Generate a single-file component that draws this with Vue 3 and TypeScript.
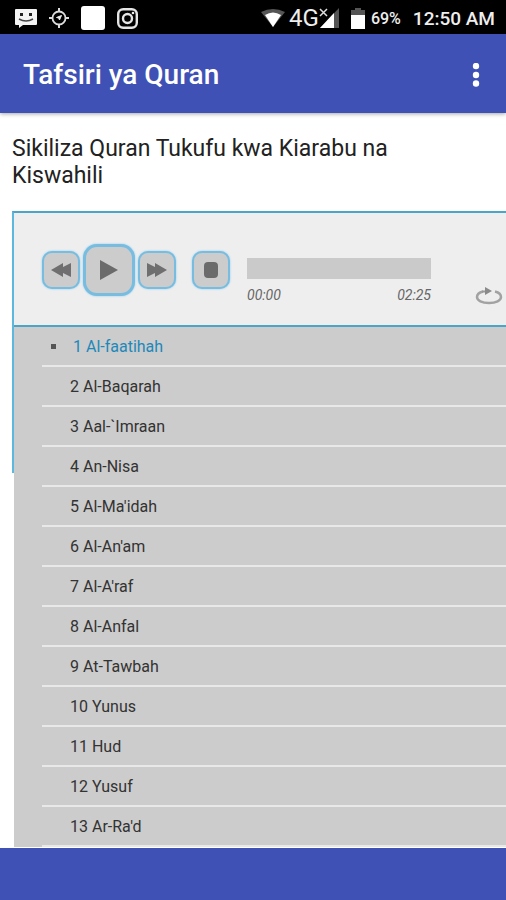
<script setup lang="ts">
import { ref } from 'vue'

const tracks: string[] = [
  'Al-faatihah',
  'Al-Baqarah',
  'Aal-`Imraan',
  'An-Nisa',
  "Al-Ma'idah",
  "Al-An'am",
  "Al-A'raf",
  'Al-Anfal',
  'At-Tawbah',
  'Yunus',
  'Hud',
  'Yusuf',
  "Ar-Ra'd",
]

const current = ref(0)
const position = ref(0)
const repeat = ref(false)

function select(index: number): void {
  current.value = Math.min(Math.max(index, 0), tracks.length - 1)
  position.value = 0
}
</script>

<template>
  <div class="screen">
    <div class="status">
      <div class="status-group notices">
        <svg width="22" height="19" viewBox="0 0 22 19" aria-hidden="true">
          <path d="M1 0h20q1 0 1 1v14q0 1-1 1H8l-4 3v-3H1q-1 0-1-1V1q0-1 1-1z" fill="#f4f4f4" />
          <rect x="5" y="4" width="3" height="3" fill="#222" />
          <rect x="14" y="4" width="3" height="3" fill="#222" />
          <path d="M4 10q7 4 14 0" fill="none" stroke="#444" stroke-width="1.500" />
        </svg>
        <svg width="20" height="20" viewBox="0 0 20 20" fill="none" stroke="#ddd" aria-hidden="true">
          <circle cx="10" cy="10" r="6.500" stroke-width="1.800" />
          <path d="M10 0v4M10 16v4M0 10h4M16 10h4" stroke-width="2" />
          <path d="M12.500 7.500l-2 4.500-.8-2L7.500 9.500z" fill="#eee" stroke="#eee" />
        </svg>
        <svg width="24" height="24" viewBox="0 0 24 24" aria-hidden="true">
          <rect width="24" height="24" rx="3" fill="#fff" />
        </svg>
        <svg width="21" height="21" viewBox="0 0 21 21" fill="none" stroke="#e4e4e4" stroke-width="2.400" aria-hidden="true">
          <rect x="1.200" y="1.200" width="18.600" height="18.600" rx="5" />
          <circle cx="10.500" cy="10.500" r="4.500" />
          <circle cx="16" cy="5" r="1.300" fill="#eee" stroke="none" />
        </svg>
      </div>
      <div class="status-group">
        <svg width="24" height="18" viewBox="0 0 24 18" aria-hidden="true">
          <path d="M0 3Q12-3 24 3L12 18z" fill="#555" />
          <path d="M4 6Q12 1 20 6L12 18z" fill="#fff" />
        </svg>
        <div class="cell">
          <span class="network">4G</span>
          <svg width="20" height="20" viewBox="0 0 20 20" aria-hidden="true">
            <path d="M20 0v20H1z" fill="#555" />
            <path d="M15 5v15H1z" fill="#fff" />
            <path d="M1 1l7 7M8 1L1 8" stroke="#000" stroke-width="4" />
            <path d="M1 1l7 7M8 1L1 8" stroke="#ddd" stroke-width="1.500" />
          </svg>
        </div>
        <div class="cell battery">
          <svg width="14" height="21" viewBox="0 0 14 21" aria-hidden="true">
            <path d="M4 0h6v2h4v5H0V2h4z" fill="#555" />
            <path d="M0 7h14v14H0z" fill="#fff" />
          </svg>
          <span class="percent">69%</span>
        </div>
        <span class="clock">12:50 AM</span>
      </div>
    </div>

    <header class="appbar">
      <h1>Tafsiri ya Quran</h1>
      <button class="menu" type="button" aria-label="Menu">
        <svg width="8" height="24" viewBox="0 0 8 24" fill="#fff" aria-hidden="true">
          <circle cx="4" cy="3" r="3.200" />
          <circle cx="4" cy="12" r="3.200" />
          <circle cx="4" cy="20.500" r="3.200" />
        </svg>
      </button>
    </header>

    <main class="content">
      <p class="intro">Sikiliza Quran Tukufu kwa Kiarabu na Kiswahili</p>

      <section class="player">
        <div class="controls">
          <div class="buttons">
            <button class="key" type="button" aria-label="Previous" @click="select(current - 1)">
              <svg width="20" height="14" viewBox="0 0 20 14" fill="#6f6f6f" aria-hidden="true">
                <path d="M0 7L12 0v4L20 0v14l-8-4v4z" />
              </svg>
            </button>
            <button class="key play" type="button" aria-label="Play">
              <svg width="18" height="20" viewBox="0 0 18 20" fill="#6b6b6b" aria-hidden="true">
                <path d="M0 0L18 10L0 20z" />
              </svg>
            </button>
            <button class="key" type="button" aria-label="Next" @click="select(current + 1)">
              <svg width="20" height="14" viewBox="0 0 20 14" fill="#6f6f6f" aria-hidden="true">
                <path d="M20 7L8 0v4L0 0v14l8-4v4z" />
              </svg>
            </button>
            <button class="key stop" type="button" aria-label="Stop" @click="position = 0">
              <svg width="14" height="16" viewBox="0 0 14 16" fill="#6b6b6b" aria-hidden="true">
                <rect width="14" height="16" rx="4" />
              </svg>
            </button>
          </div>
          <div class="progress">
            <input v-model.number="position" class="seek" type="range" min="0" max="145" aria-label="Position" />
            <div class="times">
              <span>00:00</span>
              <span>02:25</span>
            </div>
          </div>
          <button class="repeat" type="button" aria-label="Repeat" :aria-pressed="repeat" @click="repeat = !repeat">
            <svg width="28" height="18" viewBox="0 0 28 18" aria-hidden="true">
              <path d="M8 4.500C4 5.500 2 7.500 2 10c0 3.500 5 6 12 6s12-2.500 12-6c0-2.500-2-4.500-6-5.500" fill="none" stroke="#a2a2a2" stroke-width="2.500" />
              <path d="M7 4.500h4" stroke="#999" stroke-width="2" />
              <path d="M10 0l7 4-7 4z" fill="#8a8a8a" />
            </svg>
          </button>
        </div>
        <ul class="playlist">
          <li v-for="(track, index) in tracks" :key="track" :class="{ current: index === current }">
            <a href="#" @click.prevent="select(index)">{{ index + 1 }} {{ track }}</a>
          </li>
        </ul>
      </section>
    </main>

    <footer class="banner"></footer>
  </div>
</template>

<style>
body {
  margin: 0;
}
</style>

<style scoped>
.screen {
  display: flex;
  flex-direction: column;
  height: 100vh;
  background: #fff;
  color: #222;
  font-family: Roboto, "Liberation Sans", sans-serif;
}

svg {
  display: block;
}

button {
  display: flex;
  align-items: center;
  justify-content: center;
  box-sizing: border-box;
  padding: 0;
  border: 0;
  background: none;
}

.status {
  display: flex;
  flex: none;
  align-items: center;
  justify-content: space-between;
  box-sizing: border-box;
  height: 34px;
  padding: 2px 11px 0 15px;
  background: #000;
  color: #eee;
}

.status-group,
.cell {
  display: flex;
  align-items: center;
}

.notices {
  gap: 12px;
}

.network {
  margin-left: 4px;
  font-size: 24px;
}

.battery {
  gap: 6px;
  margin: 0 12px;
}

.percent {
  font-size: 16px;
  font-weight: 500;
}

.clock {
  font-size: 19px;
  font-weight: 500;
}

.appbar {
  display: flex;
  flex: none;
  align-items: center;
  justify-content: space-between;
  box-sizing: border-box;
  height: 79px;
  padding: 2px 20px 0 23px;
  background: #3f51b5;
  box-shadow: 0 1px 4px rgba(0, 0, 0, 0.35);
}

h1 {
  margin: 0;
  color: #fff;
  font-size: 28px;
  font-weight: 500;
}

.menu {
  width: 20px;
  height: 40px;
}

.content {
  flex: 1;
  min-height: 0;
  padding: 22px 0 0 12px;
  overflow: hidden;
}

.intro {
  max-width: 400px;
  margin: 0 0 22px;
  font-size: 23px;
  line-height: 27px;
}

.player {
  height: 260px;
  border-top: 2px solid #4ba5c8;
  border-left: 2px solid #5cb8dc;
}

.controls {
  display: flex;
  align-items: center;
  box-sizing: border-box;
  height: 114px;
  padding: 2px 3px 0 28px;
  border-bottom: 2px solid #4ba5c8;
  background: #eee;
}

.buttons {
  display: flex;
  flex: none;
  align-items: center;
  gap: 3px;
}

.key {
  width: 38px;
  height: 38px;
  border: 2px solid #78bde0;
  border-radius: 10px;
  background: #ccc;
  box-shadow: 0 0 2px #7cc8f0;
}

.play {
  width: 52px;
  height: 52px;
  border-width: 3px;
  border-radius: 14px;
}

.stop {
  margin-left: 13px;
}

.progress {
  flex: none;
  width: 184px;
  margin: 22px 0 0 17px;
}

.seek {
  display: block;
  width: 100%;
  height: 21px;
  margin: 0;
  background: #cacaca;
  appearance: none;
}

.seek::-webkit-slider-thumb {
  width: 1px;
  height: 21px;
  background: transparent;
  appearance: none;
}

.times {
  display: flex;
  justify-content: space-between;
  margin-top: 6px;
  color: #666;
  font-size: 14px;
  font-style: italic;
  line-height: 20px;
}

.repeat {
  margin: 52px 0 0 auto;
}

.playlist {
  margin: 0;
  padding: 0 0 0 28px;
  background: #ccc;
  list-style: none;
}

li {
  display: flex;
  align-items: center;
  box-sizing: border-box;
  height: 40px;
  padding-left: 28px;
  border-bottom: 2px solid #e8e8e8;
}

a {
  color: #333;
  font-size: 16px;
  text-decoration: none;
}

.current {
  padding-left: 9px;
}

.current::before {
  width: 5px;
  height: 5px;
  margin-right: 17px;
  background: #555;
  content: "";
}

.current a {
  color: #1e88ba;
}

.banner {
  flex: none;
  height: 52px;
  background: #3f51b5;
}
</style>
